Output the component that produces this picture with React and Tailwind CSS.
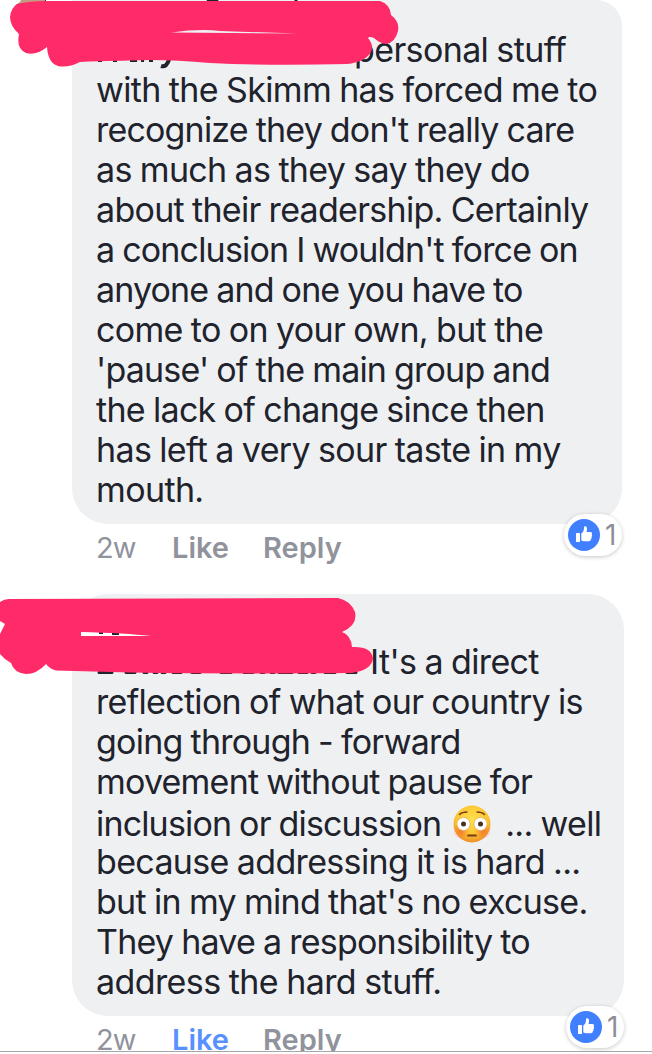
const FONT = "font-['Inter','Liberation_Sans',sans-serif]";

const firstComment = [
  ['with the Skimm has forced me to', 'tracking-[-0.65px]'],
  ["recognize they don't really care", 'tracking-[-0.82px]'],
  ['as much as they say they do', 'tracking-[-0.67px]'],
  ['about their readership. Certainly', 'tracking-[-0.71px]'],
  ["a conclusion I wouldn't force on", 'tracking-[-0.83px]'],
  ['anyone and one you have to', 'tracking-[-0.85px]'],
  ['come to on your own, but the', 'tracking-[-0.67px]'],
  ["'pause' of the main group and", 'tracking-[-0.81px]'],
  ['the lack of change since then', 'tracking-[-0.71px]'],
  ['has left a very sour taste in my', 'tracking-[-0.66px]'],
  ['mouth.', 'tracking-[-0.63px]'],
];

const secondStart = [
  ['reflection of what our country is', 'tracking-[-0.70px]'],
  ['going through - forward', 'tracking-[-0.77px]'],
  ['movement without pause for', 'tracking-[-0.79px]'],
];

const secondEnd = [
  ['because addressing it is hard ...', 'tracking-[-0.66px]'],
  ["but in my mind that's no excuse.", 'tracking-[-0.71px]'],
  ['They have a responsibility to', 'tracking-[-0.78px]'],
  ['address the hard stuff.', 'tracking-[-0.59px]'],
];

function Lines({ items }) {
  return items.map(([text, tracking]) => (
    <div key={text} className="h-10">
      <span className={tracking}>{text}</span>
    </div>
  ));
}

function Flushed() {
  return (
    <svg className="ml-[12px] mr-[14px] h-[38px] w-[38px] shrink-0" viewBox="0 0 38 38">
      <defs>
        <radialGradient id="face" cx="50%" cy="35%" r="65%">
          <stop offset="0" stopColor="#ffe04d" />
          <stop offset="0.65" stopColor="#fcc433" />
          <stop offset="1" stopColor="#ee8f25" />
        </radialGradient>
        <radialGradient id="cheek">
          <stop offset="0" stopColor="#f6642c" stopOpacity="0.75" />
          <stop offset="1" stopColor="#f6642c" stopOpacity="0" />
        </radialGradient>
      </defs>
      <circle cx="19" cy="19" r="18.5" fill="url(#face)" />
      <circle cx="8" cy="26" r="8" fill="url(#cheek)" />
      <circle cx="30" cy="26" r="8" fill="url(#cheek)" />
      <circle cx="10.5" cy="19" r="6.5" fill="#fff" stroke="#d5a766" strokeWidth="0.6" />
      <circle cx="27.5" cy="19" r="6.5" fill="#fff" stroke="#d5a766" strokeWidth="0.6" />
      <circle cx="10.5" cy="19" r="2.5" fill="#4b3024" />
      <circle cx="27.5" cy="19" r="2.5" fill="#4b3024" />
      <path d="M6.5 9.5Q9 7 14 7M24 7Q29 7 31.500 9.500" fill="none" stroke="#754019" strokeWidth="1.400" strokeLinecap="round" />
      <path d="M15 30.500H23" stroke="#754019" strokeWidth="1.800" strokeLinecap="round" />
    </svg>
  );
}

function Reaction({ place }) {
  return (
    <div className={`absolute flex h-[42px] w-[58px] items-center rounded-full bg-white pl-1 shadow-[0_1px_4px_rgba(0,0,0,0.22)] ${place}`}>
      <svg className="h-8 w-8 shrink-0" viewBox="0 0 32 32">
        <circle cx="16" cy="16" r="16" fill="#4080ff" />
        <rect x="8" y="14" width="4" height="9" rx="0.6" fill="#fff" />
        <path d="M13.300 14.600C15.500 13 16 11.200 16 8.600C16 7.400 16.800 7 17.600 7.300C19.500 8 19.300 10.700 18.500 13H22.500C24 13 24.500 14.600 23.700 15.500C24.400 16.300 24.200 17.500 23.400 18C23.900 18.900 23.500 20 22.700 20.300C22.900 21.600 22.200 22.300 20.800 22.300H16.500C15.200 22.300 14.400 21.900 13.300 21.500Z" fill="#fff" />
      </svg>
      <span className="ml-[5px] text-[28px] leading-[32px] text-[#8d8f97]">1</span>
    </div>
  );
}

function Actions({ liked }) {
  return (
    <div className="flex h-10 pl-[96px] text-[29px] leading-10 text-[#90939b]">
      <span className="w-[76px] tracking-[-1px]">2w</span>
      <span className={`w-[91px] font-semibold ${liked ? 'text-[#5890ff]' : ''}`}>Like</span>
      <span className="font-semibold">Reply</span>
    </div>
  );
}

function TopScribble() {
  return (
    <svg className="absolute left-0 top-0 h-[75px] w-[420px]" viewBox="0 0 420 75">
      <path d="M16 5L24 0H46V5L20 36Q13 25 16 5Z" fill="#49312d" />
      <path d="M21 0H45V5H18Z" fill="#c59a83" />
      <path d="M207 0Q213 3 218 0M296 0V3" stroke="#20222c" strokeWidth="3" fill="none" />
      <path d="M98 60.500H102M113 60.500H117M130 60.500H137M141 60.500H144M149 60.500H153" stroke="#20222c" strokeWidth="3" fill="none" />
      <path d="M169.500 58Q167 68 161 66" stroke="#20222c" strokeWidth="4" fill="none" />
      <path fillRule="evenodd" fill="#ff2a68" d="M17 4Q30 1 46 1H380Q390 4 391 15Q400 22 398 31Q395 43 386 44Q379 43 374 38Q369 36 368 38Q374 45 371 52Q365 62 347 64Q270 66 210 63Q165 59 130 60.500Q95 61 80 62Q68 68 58 66Q48 63 47 47Q36 56 26 53Q16 49 19 34Q10 26 10 17Q11 8 17 4ZM171 32.500Q200 28.500 220 31L298 33.500L230 33Z" />
    </svg>
  );
}

function LowerScribble() {
  return (
    <svg className="absolute left-0 top-[590px] h-[90px] w-[380px]" viewBox="0 0 380 90">
      <rect x="79" y="41" width="75" height="7" fill="#fff" />
      <path d="M99 43H103M112 44H119" stroke="#20222c" strokeWidth="2" />
      <path d="M99 82.500H112M126 82.500H135M144 82.500H147M154 82.500H157M162 82.500H165M173 82.500H181M192 82.500H200M221 82.500H231M244 82.500H253M261 82.500H264M271 82.500H274M279 82.500H292M299 82.500H307M312 82.500H315M325 82.500H335M347 82.500H356" stroke="#20222c" strokeWidth="3" strokeLinecap="round" />
      <path fillRule="evenodd" fill="#ff2a68" d="M0 12Q4 9 9 9L338 8Q351 11 355 22Q358 35 342 42Q351 45 352 57Q371 56 373 68Q372 80 352 83Q225 84 130 82.500L56 80.500Q50 79 46 74Q37 84 26 84Q14 83 11 73Q5 70 0 64V44L5 34L0 31ZM81 42V46H151Q125 43 81 42Z" />
    </svg>
  );
}

export default function App() {
  return (
    <main className={`relative h-[1054px] w-[652px] overflow-hidden bg-white text-[34px] leading-10 whitespace-nowrap text-[#20222c] [word-spacing:-0.8px] ${FONT}`}>
      <div className="flex h-[1051px] flex-col overflow-hidden">
        <section className="relative ml-[72px] h-[524px] w-[550px] shrink-0 rounded-b-[36px] rounded-tr-[26px] bg-[#eff0f2] pl-[24px] pt-[30px]">
          <div className="h-10 pl-[258px]">
            <span className="tracking-[-0.62px]">personal stuff</span>
          </div>
          <Lines items={firstComment} />
          <Reaction place="left-[492px] top-[514px]" />
        </section>
        <div className="mt-1 h-[66px] shrink-0">
          <Actions />
        </div>
        <section className="relative ml-[72px] h-[422px] w-[552px] shrink-0 rounded-[36px] bg-[#eff0f2] pl-[24px] pt-[48px]">
          <div className="h-10 pl-[274px]">
            <span className="tracking-[-0.64px]">It's a direct</span>
          </div>
          <Lines items={secondStart} />
          <div className="flex h-10 items-center pt-1">
            <span className="tracking-[-0.84px]">inclusion or discussion</span>
            <Flushed />
            <span className="tracking-[-0.7px]">... well</span>
          </div>
          <Lines items={secondEnd} />
          <Reaction place="left-[494px] top-[412px]" />
        </section>
        <div className="mt-1 shrink-0">
          <Actions liked />
        </div>
      </div>
      <div className="h-px bg-[#a6a6a8]" />
      <TopScribble />
      <LowerScribble />
    </main>
  );
}
